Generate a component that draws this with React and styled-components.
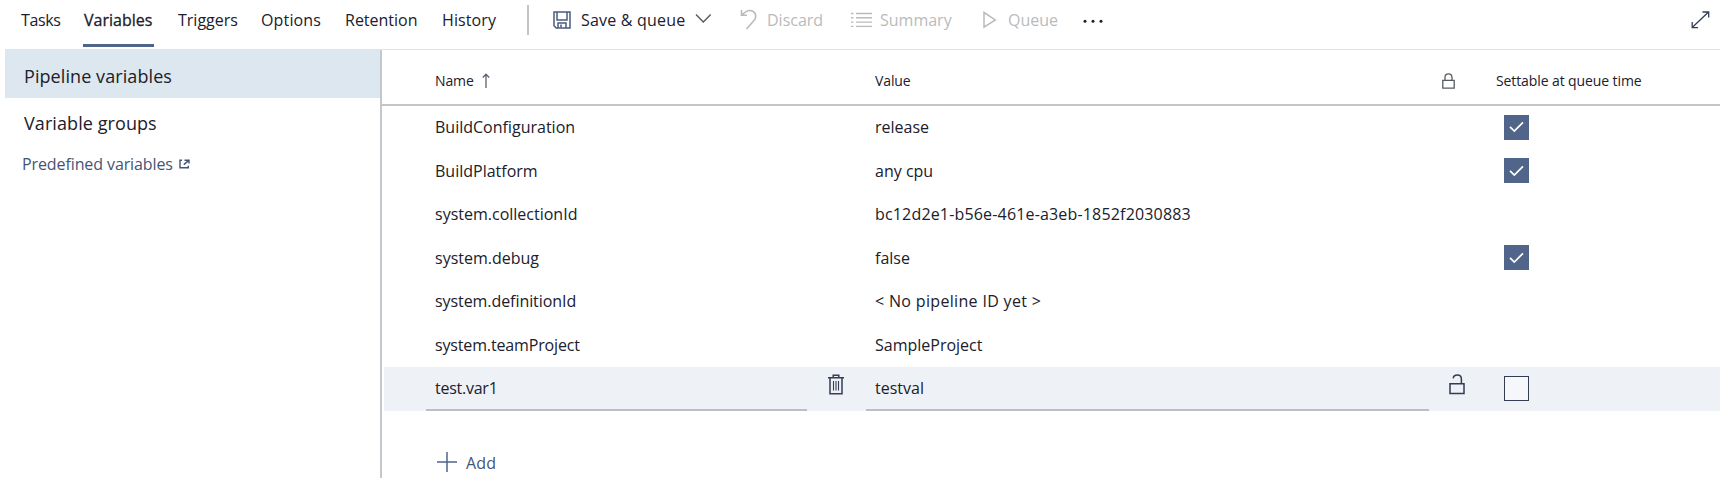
import React from "react";
import styled, { createGlobalStyle } from "styled-components";

const GlobalStyle = createGlobalStyle`
  * { box-sizing: border-box; }
  body {
    margin: 0;
    background: #fff;
    color: #20202b;
    font-family: "Open Sans", "Noto Sans", sans-serif;
    font-size: 16px;
  }
`;

const Page = styled.div`
  display: flex;
  flex-direction: column;
  height: 478px;
  padding: 0 5px;
`;

const Toolbar = styled.header`
  display: flex;
  align-items: flex-start;
  height: 50px;
  border-bottom: 1px solid #dde5ea;
`;

const Tabs = styled.nav`
  display: flex;
  gap: 24px;
  padding-left: 16px;
`;

const Tab = styled.a`
  width: ${(p) => p.$width}px;
  height: 47px;
  padding-left: ${(p) => (p.$active ? 1 : 0)}px;
  line-height: 40px;
  white-space: nowrap;
  letter-spacing: ${(p) => p.$tracking || 0}px;
  border-bottom: 3px solid ${(p) => (p.$active ? "#50648b" : "transparent")};
  ${(p) => p.$active && "-webkit-text-stroke: 0.3px;"}
`;

const Divider = styled.span`
  width: 2px;
  height: 30px;
  margin: 5px 24px 0 31px;
  background: #c2c4c6;
`;

const Actions = styled.div`
  display: flex;
  flex: 1;
  height: 40px;
  line-height: 40px;
`;

const Action = styled.button`
  display: flex;
  align-items: center;
  width: ${(p) => p.$width}px;
  gap: ${(p) => p.$gap || 0}px;
  padding: 0;
  border: 0;
  background: none;
  font: inherit;
  line-height: 40px;
  letter-spacing: ${(p) => p.$tracking || 0}px;
  white-space: nowrap;
  color: ${(p) => (p.disabled ? "#b9bbbb" : "#20202b")};
`;

const ExpandButton = styled(Action)`
  margin-left: auto;
`;

const Icon = styled.svg`
  flex: none;
  display: block;
  fill: none;
  stroke: ${(p) => p.$color || "currentColor"};
  stroke-width: ${(p) => p.$weight || 1.3};
`;

const Body = styled.div`
  display: flex;
  flex: 1;
  min-height: 0;
`;

const Sidebar = styled.aside`
  width: 377px;
  border-right: 2px solid #c3c8cd;
`;

const SideItem = styled.a`
  display: block;
  height: ${(p) => (p.$active ? 48 : 50)}px;
  padding: ${(p) => (p.$active ? 4 : 1)}px 0 0 19px;
  line-height: ${(p) => (p.$active ? 45 : 49)}px;
  font-size: 18px;
  letter-spacing: 0.08px;
  background: ${(p) => (p.$active ? "#dde7ef" : "transparent")};
`;

const SideLink = styled.a`
  display: flex;
  align-items: center;
  gap: 6px;
  height: 32px;
  padding-left: 17px;
  letter-spacing: -0.1px;
  color: #465474;
`;

const Main = styled.main`
  display: flex;
  flex: 1;
  flex-direction: column;
`;

const Grid = styled.div`
  display: grid;
  grid-template-columns: 381px 59px 563px 67px 1fr;
  padding-left: 42px;
`;

const HeadRow = styled(Grid)`
  height: 56px;
  padding-left: 44px;
  border-bottom: 2px solid #c3c4c5;
  font-size: 14px;
`;

const HeadCell = styled.div`
  display: flex;
  align-items: center;
  gap: 8px;
  padding: 7px 0 0 ${(p) => p.$indent || 0}px;
  letter-spacing: -0.1px;
`;

const Row = styled(Grid)`
  height: 43.5px;
  margin-left: 2px;
  background: ${(p) => (p.$selected ? "#eef2f7" : "transparent")};
`;

const TextCell = styled.div`
  height: 43.5px;
  padding-left: 9px;
  line-height: 42.5px;
  white-space: nowrap;
  letter-spacing: ${(p) => p.$tracking || 0}px;
  border-bottom: ${(p) => (p.$editing ? "2px solid #b9bfc5" : "0")};
`;

const IconCell = styled.div`
  padding: 7px 0 0 ${(p) => p.$indent}px;
`;

const CheckCell = styled.div`
  display: flex;
  align-items: center;
  padding: 0 0 1px 8px;
`;

const CheckBox = styled.span`
  display: flex;
  align-items: center;
  justify-content: center;
  width: 25px;
  height: 25px;
  background: ${(p) => (p.$checked ? "#51658a" : "#f5f7fa")};
  border: ${(p) => (p.$checked ? "0" : "1.5px solid #343c52")};
  color: #fff;
`;

const AddButton = styled.button`
  display: flex;
  align-items: center;
  gap: 9px;
  margin: 39px 0 0 55px;
  padding: 0;
  border: 0;
  background: none;
  font: inherit;
  letter-spacing: 0.2px;
  line-height: 22px;
  color: #465474;
`;

const AddLabel = styled.span`
  padding-top: 2px;
`;

const SaveIcon = () => (
  <Icon width="18" height="18" viewBox="0 0 18 18" $color="#4b5c7e" $weight="1.5">
    <path d="M1 1H17V17H3.2L1 14.8Z" />
    <path d="M4 1V9H14V1M5 17V12H13V17M8 13.5V16.5" />
  </Icon>
);
const ChevronDown = () => (
  <Icon width="17" height="22" viewBox="0 0 17 22" $color="#55565c">
    <path d="M1 5.5L8.3 13L15.7 5.5" />
  </Icon>
);
const UndoIcon = () => (
  <Icon width="18" height="22" viewBox="0 0 18 22" $weight="1.6">
    <path d="M1.5 1V6.3H7M1.8 6C6.5 1.2 10 .9 12.3 2C16.5 4 16.5 8.5 14 11.5L6.5 20" />
  </Icon>
);
const ListIcon = () => (
  <Icon width="21" height="17" viewBox="0 0 21 17" $weight="1.4">
    <path d="M5 1.5H21M5 5.8H21M5 10.1H21M5 14.4H21M0 1.5H2.5M0 5.8H2.5M0 10.1H2.5M0 14.4H2.5" />
  </Icon>
);
const PlayIcon = () => (
  <Icon width="14" height="19" viewBox="0 0 14 19" $weight="1.5">
    <path d="M1 1.5V16.2L12.3 8.9Z" />
  </Icon>
);
const DotsIcon = () => (
  <Icon width="20" height="5" viewBox="0 0 20 5">
    <g fill="currentColor" stroke="none">
      <circle cx="2" cy="3.3" r="1.5" />
      <circle cx="10" cy="3.3" r="1.5" />
      <circle cx="18" cy="3.3" r="1.5" />
    </g>
  </Icon>
);
const ExpandIcon = () => (
  <Icon width="19" height="19" viewBox="0 0 19 19" $color="#343e56">
    <path d="M1.2 16.5L17.5 1M11.5 1H17.7V6.5M1.2 11V16.7H7" />
  </Icon>
);
const ExternalIcon = () => (
  <Icon width="11" height="10" viewBox="0 0 11 10" $weight="1.4">
    <path d="M3 1.2H1V8.8H9.3V6.8M5.5 1.2H10V4.4M4.8 5.6L9.8 1.4" />
  </Icon>
);
const ArrowUp = () => (
  <Icon width="8" height="15" viewBox="0 0 8 15" $color="#5c6470">
    <path d="M4 15V1.2M.8 4.5L4 1.2L7.2 4.5" />
  </Icon>
);
const LockIcon = () => (
  <Icon width="13" height="16" viewBox="0 0 13 16" $color="#565a62">
    <path d="M.8 7.4H12.2V15.2H.8ZM3 7.4V4.4C3 2 4.4 .8 6.5 .8S10 2 10 4.4V7.4" />
  </Icon>
);
const UnlockIcon = () => (
  <Icon width="16" height="21" viewBox="0 0 16 21" $color="#333b50" $weight="1.5">
    <path d="M1 9.8H15V19.5H1ZM12.4 9.8V5.2C12.4 2.5 10.8 1 8.4 1C6 1 4.4 2.2 4.2 4.4" />
  </Icon>
);
const TrashIcon = () => (
  <Icon width="16" height="21" viewBox="0 0 16 21" $color="#353e54" $weight="1.5">
    <path d="M0 3.7H16M2 3.7V19.7H14V3.7M5.2 3.5V1.2H10.8V3.5" />
    <path strokeWidth="1.1" d="M5.5 7V16.5M8 7V16.5M10.5 7V16.5" />
  </Icon>
);
const CheckIcon = () => (
  <Icon width="15" height="12" viewBox="0 0 15 12" $weight="1.7">
    <path d="M1 5.8L5.3 10L14 1.3" />
  </Icon>
);
const PlusIcon = () => (
  <Icon width="20" height="20" viewBox="0 0 20 20" $weight="1.5" $color="#50648b">
    <path d="M10 0V20M0 10H20" />
  </Icon>
);

const tabs = [
  { label: "Tasks", width: 38, tracking: -0.35 },
  { label: "Variables", width: 71, active: true },
  { label: "Triggers", width: 59 },
  { label: "Options", width: 60, tracking: 0.15 },
  { label: "Retention", width: 73 },
  { label: "History", width: 54, tracking: 0.1 },
];

const variables = [
  { name: "BuildConfiguration", value: "release", settable: true },
  { name: "BuildPlatform", value: "any cpu", settable: true },
  { name: "system.collectionId", value: "bc12d2e1-b56e-461e-a3eb-1852f2030883", valueTracking: 0.17 },
  { name: "system.debug", value: "false", settable: true },
  { name: "system.definitionId", value: "< No pipeline ID yet >", valueTracking: 0.33, nameTracking: -0.07 },
  { name: "system.teamProject", value: "SampleProject", nameTracking: -0.15 },
  { name: "test.var1", value: "testval", nameTracking: -0.25, editing: true },
];

const VariableRow = ({ item }) => (
  <Row $selected={item.editing}>
    <TextCell $editing={item.editing} $tracking={item.nameTracking}>{item.name}</TextCell>
    <IconCell $indent={21}>{item.editing && <TrashIcon />}</IconCell>
    <TextCell $editing={item.editing} $tracking={item.valueTracking}>{item.value}</TextCell>
    <IconCell $indent={20}>{item.editing && <UnlockIcon />}</IconCell>
    <CheckCell>
      {(item.settable || item.editing) && (
        <CheckBox $checked={item.settable}>{item.settable && <CheckIcon />}</CheckBox>
      )}
    </CheckCell>
  </Row>
);

export default function App() {
  return (
    <Page>
      <GlobalStyle />
      <Toolbar>
        <Tabs>
          {tabs.map((t) => (
            <Tab key={t.label} $width={t.width} $active={t.active} $tracking={t.tracking}>
              {t.label}
            </Tab>
          ))}
        </Tabs>
        <Divider />
        <Actions>
          <Action $width={187} $gap={10} $tracking={0.2}>
            <SaveIcon />
            Save &amp; queue
            <ChevronDown />
          </Action>
          <Action disabled $width={111} $gap={9}>
            <UndoIcon />
            Discard
          </Action>
          <Action disabled $width={132} $gap={8}>
            <ListIcon />
            Summary
          </Action>
          <Action disabled $width={100} $gap={11}>
            <PlayIcon />
            Queue
          </Action>
          <Action $width={20} aria-label="More">
            <DotsIcon />
          </Action>
          <ExpandButton $width={29} aria-label="Full screen">
            <ExpandIcon />
          </ExpandButton>
        </Actions>
      </Toolbar>
      <Body>
        <Sidebar>
          <SideItem $active>Pipeline variables</SideItem>
          <SideItem>Variable groups</SideItem>
          <SideLink>
            Predefined variables
            <ExternalIcon />
          </SideLink>
        </Sidebar>
        <Main>
          <HeadRow>
            <HeadCell $indent={9}>
              Name
              <ArrowUp />
            </HeadCell>
            <HeadCell />
            <HeadCell $indent={9}>Value</HeadCell>
            <HeadCell $indent={13}>
              <LockIcon />
            </HeadCell>
            <HeadCell>Settable at queue time</HeadCell>
          </HeadRow>
          {variables.map((item) => (
            <VariableRow key={item.name} item={item} />
          ))}
          <AddButton>
            <PlusIcon />
            <AddLabel>Add</AddLabel>
          </AddButton>
        </Main>
      </Body>
    </Page>
  );
}
